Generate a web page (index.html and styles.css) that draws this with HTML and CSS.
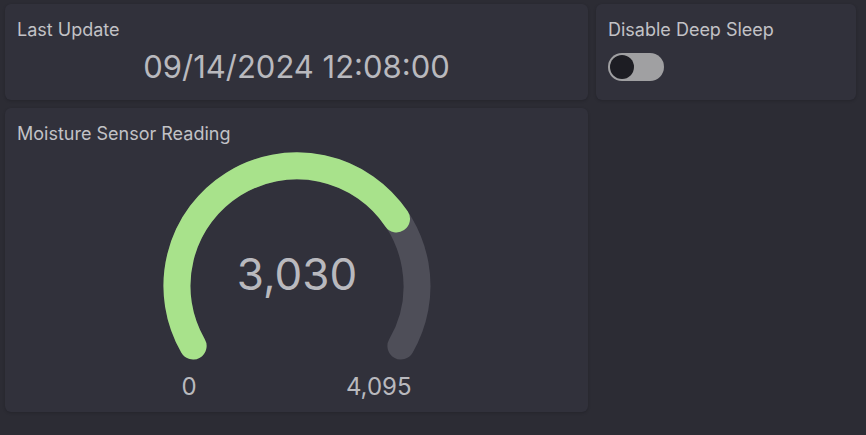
FILE: index.html
```html
<!DOCTYPE html>
<html lang="en">
<head>
<meta charset="utf-8">
<title>Dashboard</title>
<link rel="stylesheet" href="styles.css">
</head>
<body>
<main class="grid">
  <section class="card card-update">
    <h2 class="card-title">Last Update</h2>
    <div class="update-value">09/14/2024 12:08:00</div>
  </section>
  <section class="card card-sleep">
    <h2 class="card-title">Disable Deep Sleep</h2>
    <div class="toggle" role="switch" aria-checked="false"><span class="knob"></span></div>
  </section>
  <section class="card card-gauge">
    <h2 class="card-title">Moisture Sensor Reading</h2>
    <div class="gauge">
      <svg class="gauge-svg" width="270" height="212" viewBox="0 0 270 212">
        <path class="gauge-track" d="M 31.08 195 A 120 120 0 1 1 238.92 195"/>
        <path class="gauge-value" d="M 31.08 195 A 120 120 0 0 1 234.5 67.9"/>
        <text class="gauge-number" x="135" y="139" text-anchor="middle">3,030</text>
      </svg>
      <div class="gauge-labels">
        <span>0</span>
        <span>4,095</span>
      </div>
    </div>
  </section>
</main>
</body>
</html>
```
FILE: styles.css
```css
html, body {
  margin: 0;
  padding: 0;
  background: #2c2c34;
}
body {
  font-family: Inter, "Noto Sans", "Liberation Sans", sans-serif;
  color: #c8c8cc;
  width: 866px;
  height: 435px;
  overflow: hidden;
}
.grid {
  display: grid;
  grid-template-columns: 583px 260px;
  grid-template-rows: 96px 304px;
  gap: 8px;
  padding: 4px 0 0 5px;
}
.card {
  background: #31313b;
  border-radius: 6px;
  box-shadow: 0 1px 3px rgba(0, 0, 0, 0.18);
  padding: 15px 12px 0 12px;
  box-sizing: border-box;
  display: flex;
  flex-direction: column;
}
.card-title {
  margin: 0;
  font-size: 18px;
  font-weight: 400;
  line-height: 22px;
  color: #c2c2c6;
}
.card-update {
  grid-column: 1;
  grid-row: 1;
}
.update-value {
  margin-top: 6px;
  font-size: 31px;
  line-height: 40px;
  text-align: center;
  color: #b9b9be;
}
.card-sleep {
  grid-column: 2;
  grid-row: 1;
}
.toggle {
  margin-top: 12px;
  width: 56px;
  height: 28px;
  border-radius: 14px;
  background: #a0a0a2;
  display: flex;
  align-items: center;
  padding: 0 2px;
  box-sizing: border-box;
}
.knob {
  width: 24px;
  height: 24px;
  border-radius: 50%;
  background: #1d1d23;
}
.card-gauge {
  grid-column: 1;
  grid-row: 2;
}
.gauge {
  display: flex;
  flex-direction: column;
  align-items: center;
}
.gauge-svg {
  display: block;
  margin-top: 6px;
}
.gauge-track {
  fill: none;
  stroke: #4e4e58;
  stroke-width: 27;
  stroke-linecap: round;
}
.gauge-value {
  fill: none;
  stroke: #a8e28b;
  stroke-width: 27;
  stroke-linecap: round;
}
.gauge-number {
  font-family: Inter, "Noto Sans", "Liberation Sans", sans-serif;
  font-size: 44px;
  fill: #b9b9be;
}
.gauge-labels {
  margin-top: 9px;
  width: 230px;
  display: flex;
  justify-content: space-between;
  font-size: 24px;
  line-height: 30px;
  color: #b9b9be;
}
```
